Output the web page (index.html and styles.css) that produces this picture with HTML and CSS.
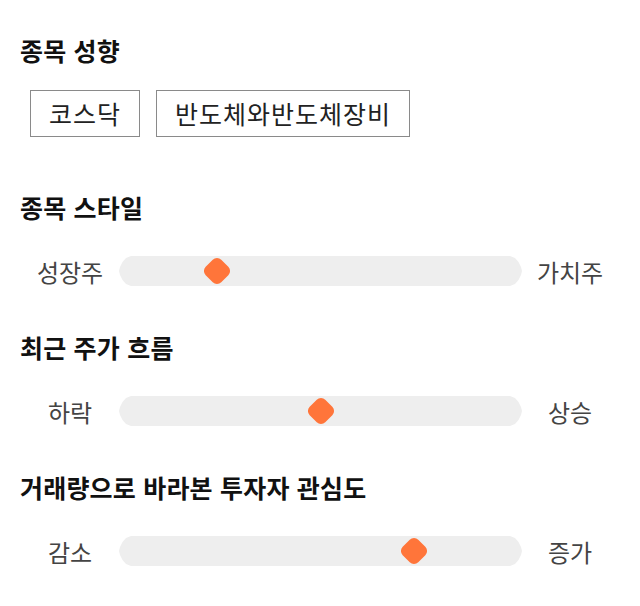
FILE: index.html
```html
<!DOCTYPE html>
<html lang="ko">
<head>
    <meta charset="UTF-8">
    <meta name="viewport" content="width=device-width, initial-scale=1.0">
    <title>종목 성향</title>
    <link rel="stylesheet" href="styles.css">
</head>
<body>
    <div class="stock-profile">
        <section class="section">
            <h2 class="section-title">종목 성향</h2>
            <div class="tags">
                <span class="tag">코스닥</span>
                <span class="tag">반도체와반도체장비</span>
            </div>
        </section>

        <section class="section">
            <h2 class="section-title">종목 스타일</h2>
            <div class="scale">
                <span class="scale-label">성장주</span>
                <div class="scale-track">
                    <span class="scale-thumb" style="left: 24.25%"></span>
                </div>
                <span class="scale-label">가치주</span>
            </div>
        </section>

        <section class="section">
            <h2 class="section-title">최근 주가 흐름</h2>
            <div class="scale">
                <span class="scale-label">하락</span>
                <div class="scale-track">
                    <span class="scale-thumb" style="left: 50%"></span>
                </div>
                <span class="scale-label">상승</span>
            </div>
        </section>

        <section class="section">
            <h2 class="section-title">거래량으로 바라본 투자자 관심도</h2>
            <div class="scale">
                <span class="scale-label">감소</span>
                <div class="scale-track">
                    <span class="scale-thumb" style="left: 73.25%"></span>
                </div>
                <span class="scale-label">증가</span>
            </div>
        </section>
    </div>
</body>
</html>
```

FILE: styles.css
```css
body {
    margin: 0;
    background-color: #fff;
    font-family: 'Noto Sans CJK KR', 'Noto Sans', sans-serif;
    color: #111;
}

.stock-profile {
    padding: 34px 20px 0 20px;
}

.section-title {
    margin: 0;
    font-size: 25px;
    font-weight: 700;
    line-height: 32px;
    letter-spacing: 0.2px;
}

.tags {
    display: flex;
    gap: 16px;
    padding: 24px 0 0 10px;
    margin-bottom: 54px;
}

.tag {
    border: 1px solid #8a8a8a;
    padding: 6px 18px;
    font-size: 25px;
    line-height: 33px;
    letter-spacing: 1px;
    color: #222;
}

.scale {
    display: flex;
    align-items: center;
    height: 30px;
    margin: 33px 0 45px 0;
}

.scale-label {
    width: 100px;
    text-align: center;
    font-size: 24px;
    color: #444;
}

.scale-track {
    position: relative;
    flex: 1;
    height: 30px;
    margin: 0 -2px 0 -1px;
    background-color: #eeeeee;
    clip-path: polygon(
        12px 0, calc(100% - 12px) 0,
        calc(100% - 7px) 2px, calc(100% - 3.5px) 6px, calc(100% - 1px) 11px,
        100% 15px,
        calc(100% - 1px) 19px, calc(100% - 3.5px) 24px, calc(100% - 7px) 28px,
        calc(100% - 12px) 30px, 12px 30px,
        7px 28px, 3.5px 24px, 1px 19px,
        0 15px,
        1px 11px, 3.5px 6px, 7px 2px
    );
}

.scale-thumb {
    position: absolute;
    top: 50%;
    width: 22px;
    height: 22px;
    margin: -11px 0 0 -11px;
    background-color: #ff753a;
    border-radius: 6px;
    transform: rotate(45deg);
}
```
